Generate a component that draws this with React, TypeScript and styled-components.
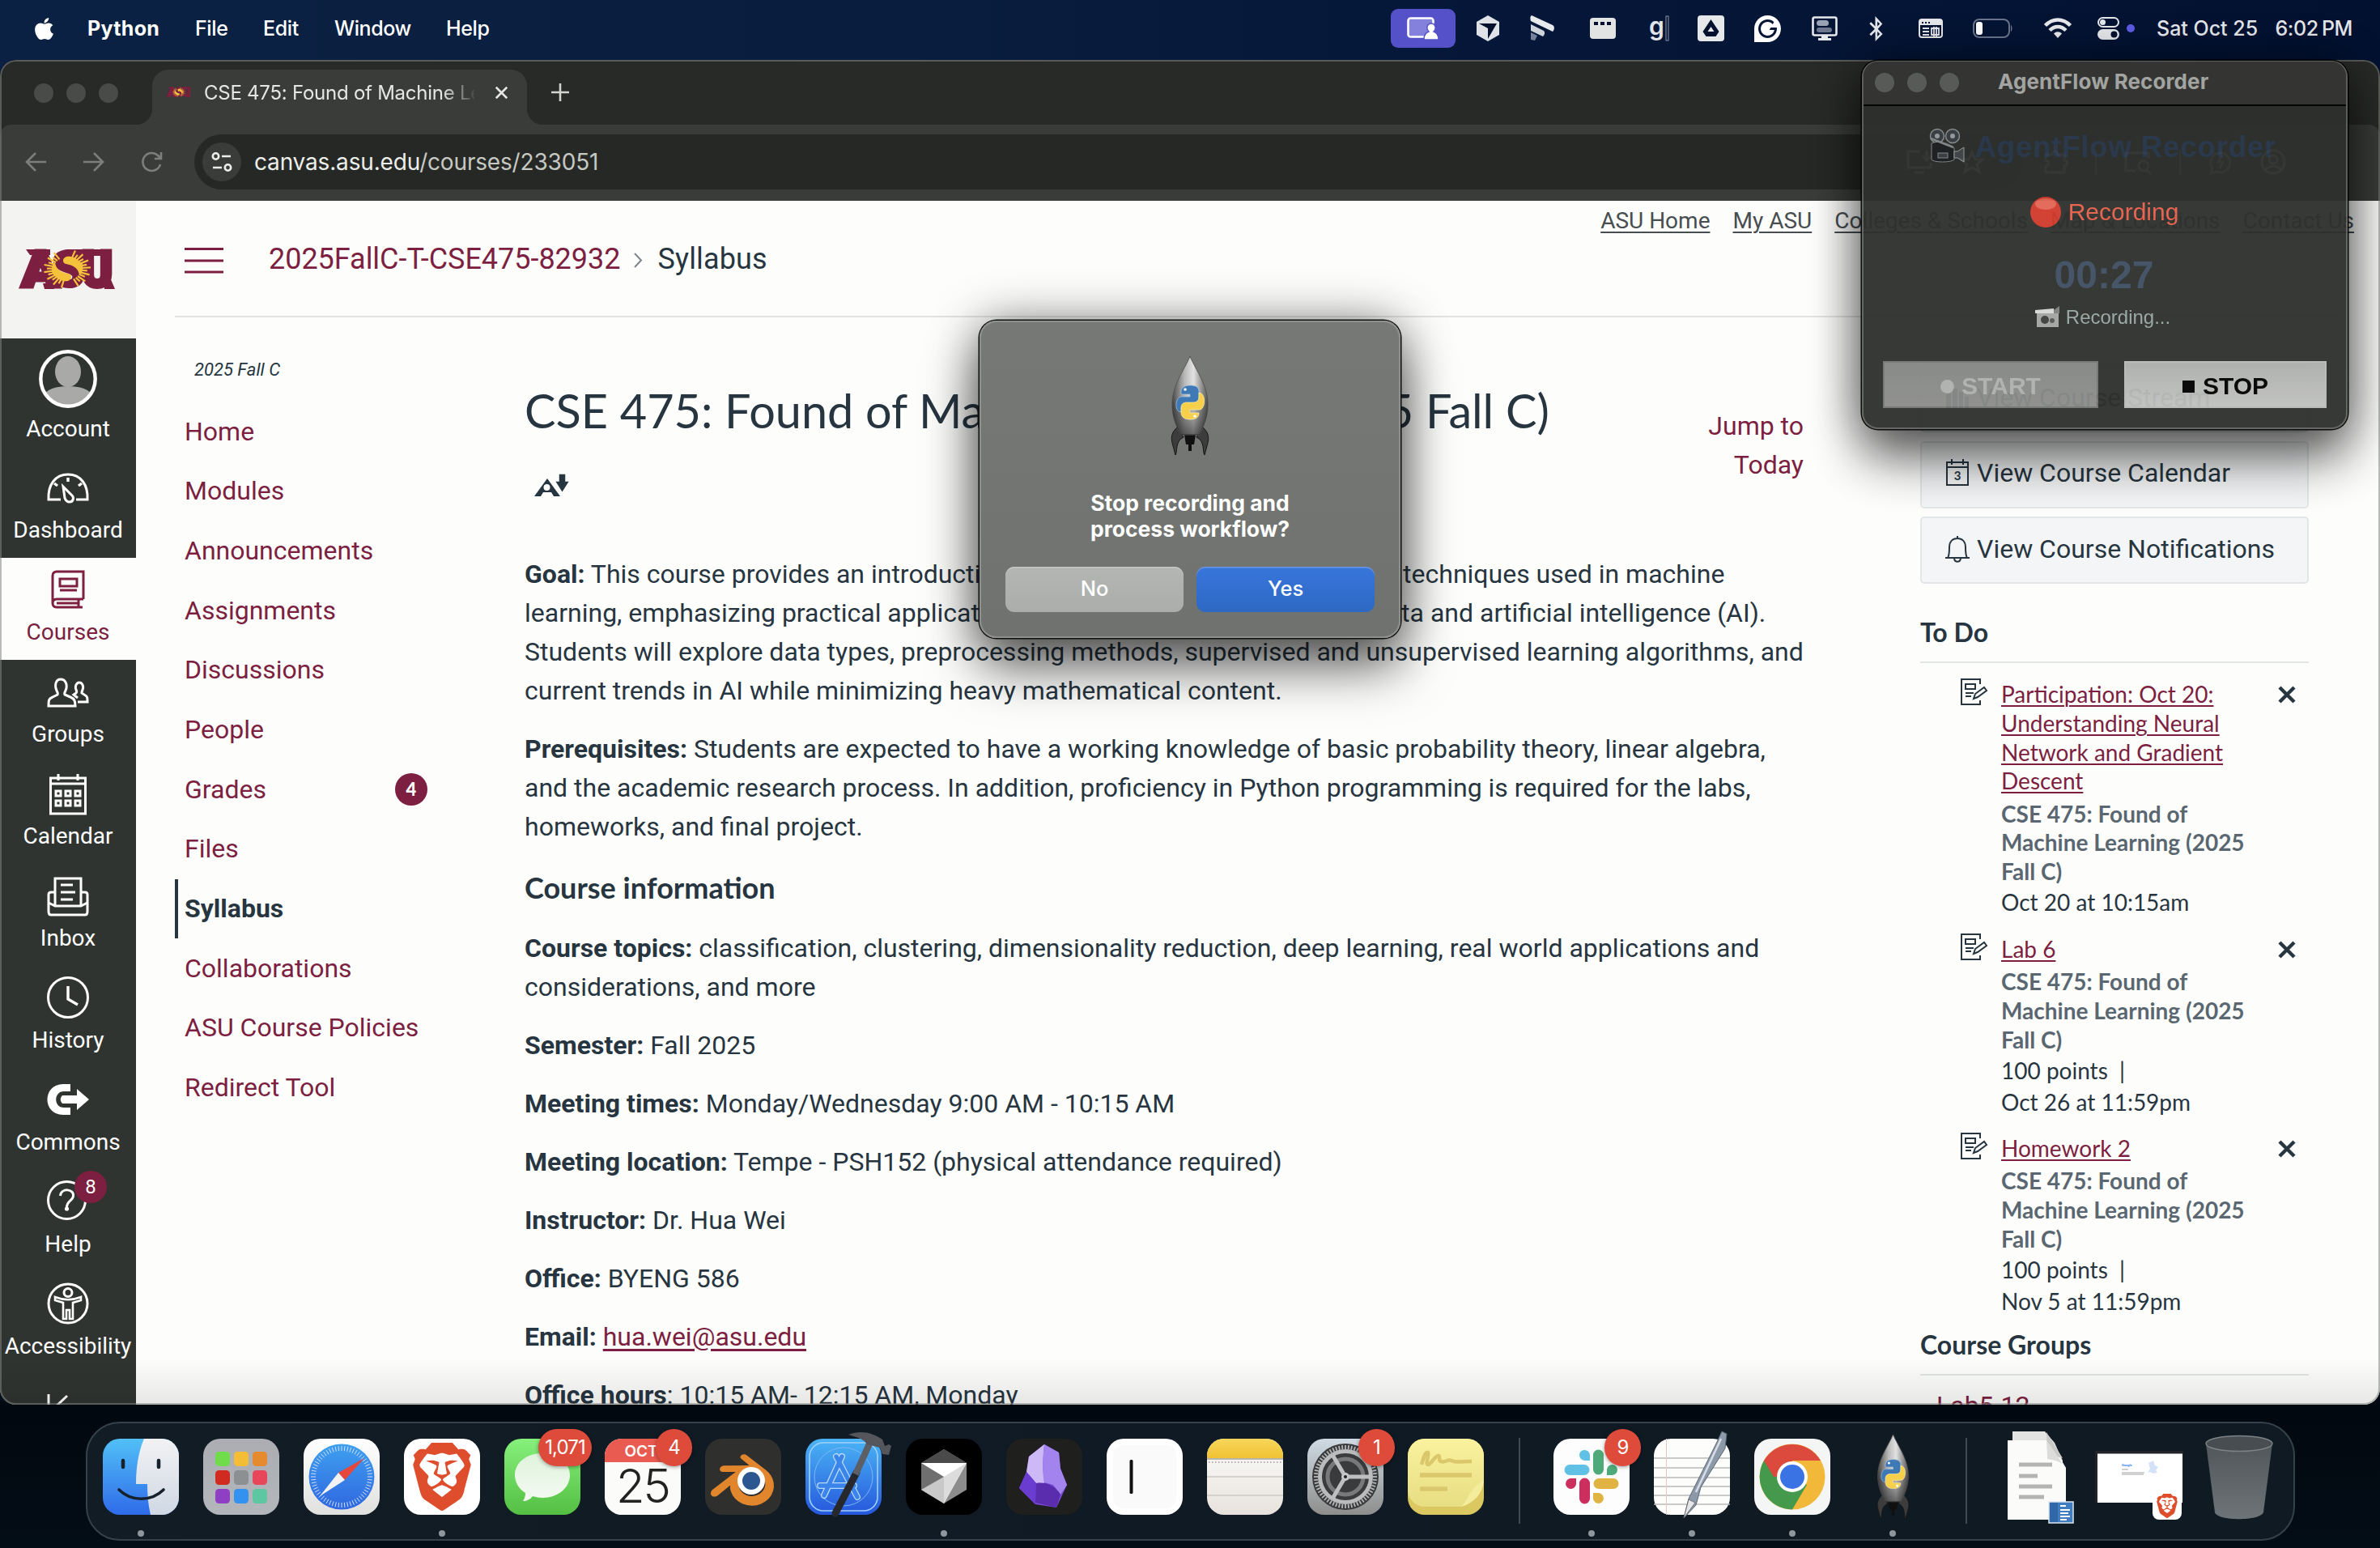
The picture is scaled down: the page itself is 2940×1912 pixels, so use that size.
import React from "react";
import styled, { createGlobalStyle, css } from "styled-components";
import { FaApple, FaBluetoothB } from "react-icons/fa";
import { SiBrave, SiBlender, SiGrammarly } from "react-icons/si";

const MAROON = "#7c1f40";
const INK = "#273540";

const GlobalStyle = createGlobalStyle`
  * { box-sizing: border-box; }
  html, body { margin: 0; padding: 0; width: 2940px; height: 1912px; overflow: hidden; background: #02080f; }
  svg { display: block; overflow: visible; flex: none; }
  p, h1, h2, h3, ul { margin: 0; padding: 0; }
`;

/* ---------- desktop ---------- */

const Desktop = styled.div`
  position: relative;
  width: 2940px;
  height: 1912px;
  overflow: hidden;
  font-family: Roboto, "Liberation Sans", sans-serif;
  background:
    linear-gradient(180deg, transparent 0 1700px, #02080f 1735px, #030d16 1912px),
    linear-gradient(90deg, #0b2143 0%, #0a1f40 30%, #06183a 58%, #021130 100%);
`;

const SystemText = css`
  font-family: Inter, Roboto, sans-serif;
`;

const MenuBar = styled.header`
  ${SystemText}
  display: flex;
  align-items: center;
  height: 74px;
  padding: 0 34px 4px 39px;
  color: #fff;
  font-size: 25px;
`;

const MenuTitle = styled.span<{ $w: number; $bold?: boolean; $ls?: number }>`
  width: ${(p) => p.$w}px;
  font-weight: ${(p) => (p.$bold ? 700 : 500)};
  letter-spacing: ${(p) => p.$ls ?? -0.4}px;
  white-space: nowrap;
`;

const Status = styled.div`
  display: flex;
  align-items: center;
  margin-left: auto;
  color: #e6e8ec;
`;

const Slot = styled.span<{ $w: number; $ml: number }>`
  display: flex;
  justify-content: center;
  align-items: center;
  width: ${(p) => p.$w}px;
  margin-left: ${(p) => p.$ml}px;
`;

const SharePill = styled.span`
  display: flex;
  align-items: center;
  justify-content: center;
  width: 80px;
  height: 48px;
  border-radius: 9px;
  background: #5551c9;
`;

const Clock = styled.span`
  display: flex;
  justify-content: space-between;
  width: 242px;
  margin-left: 27px;
  font-weight: 500;
  letter-spacing: 0;
  white-space: nowrap;
`;

const ClockTime = styled.span`
  letter-spacing: -0.4px;
  word-spacing: -2px;
`;

/* ---------- browser ---------- */

const Browser = styled.section`
  position: absolute;
  left: 0;
  top: 74px;
  width: 2940px;
  height: 1661px;
  display: flex;
  flex-direction: column;
  border-radius: 20px;
  overflow: hidden;
  background: #282a27;
  &::after {
    content: "";
    position: absolute;
    inset: 0;
    border-radius: 20px;
    pointer-events: none;
    background: linear-gradient(180deg, transparent 96.5%, rgba(0, 0, 0, 0.09) 100%);
    box-shadow: inset 0 0 0 2px rgba(130, 132, 128, 0.55);
  }
`;

const TabStrip = styled.div`
  display: flex;
  align-items: flex-end;
  height: 80px;
  padding-left: 42px;
`;

const Lights = styled.div<{ $c: string; $pb?: number }>`
  display: flex;
  gap: 16px;
  padding-bottom: ${(p) => p.$pb ?? 0}px;
  i {
    width: 24px;
    height: 24px;
    border-radius: 50%;
    background: ${(p) => p.$c};
  }
`;

const Tab = styled.div`
  ${SystemText}
  position: relative;
  display: flex;
  align-items: center;
  width: 463px;
  height: 68px;
  margin-left: 42px;
  padding: 0 24px 12px 18px;
  border-radius: 20px 20px 0 0;
  background: #393c38;
  color: #e6e7e4;
  font-size: 24px;
  &::before,
  &::after {
    content: "";
    position: absolute;
    bottom: 0;
    width: 20px;
    height: 20px;
  }
  &::before {
    left: -20px;
    background: radial-gradient(circle at 0 0, transparent 20px, #393c38 20.5px);
  }
  &::after {
    right: -20px;
    background: radial-gradient(circle at 100% 0, transparent 20px, #393c38 20.5px);
  }
`;

const TabTitle = styled.span`
  flex: 1;
  margin: 0 26px 0 16px;
  overflow: hidden;
  white-space: nowrap;
  letter-spacing: -0.25px;
  mask-image: linear-gradient(90deg, #000 88%, transparent 101%);
`;

const NewTab = styled.span`
  margin: 0 0 29px 30px;
`;

const Toolbar = styled.div`
  display: flex;
  align-items: center;
  height: 94px;
  padding: 0 30px 2px 30px;
  border-radius: 14px 14px 0 0;
  background: #393c38;
`;

const NavIcons = styled.div`
  display: flex;
  gap: 44px;
  width: 210px;
`;

const Omnibox = styled.div`
  ${SystemText}
  display: flex;
  align-items: center;
  width: 2260px;
  height: 68px;
  padding: 0 50px 0 10px;
  border-radius: 34px;
  background: #262825;
  color: #c6c8c4;
  font-size: 28px;
  b { font-weight: 400; color: #eceeea; }
`;

const SiteInfo = styled.span`
  display: flex;
  align-items: center;
  justify-content: center;
  width: 48px;
  height: 48px;
  margin-right: 16px;
  border-radius: 50%;
  background: #393c38;
`;

const Address = styled.span`
  flex: 1;
  letter-spacing: -0.17px;
`;

const ToolIcons = styled.div<{ $ml?: number }>`
  display: flex;
  align-items: center;
  gap: 34px;
  margin-left: ${(p) => p.$ml ?? 0}px;
`;

const Divider = styled.i`
  width: 2px;
  height: 30px;
  background: #aaa;
`;

/* ---------- canvas page ---------- */

const Page = styled.div`
  flex: 1;
  display: flex;
  min-height: 0;
  background: #fdfefc;
  color: ${INK};
`;

const Rail = styled.nav`
  width: 168px;
  background: #303430;
`;

const LogoBox = styled.div`
  display: flex;
  align-items: center;
  justify-content: center;
  height: 170px;
  background: #f3f4f2;
`;

const RailItem = styled.div<{ $active?: boolean; $h?: number }>`
  display: flex;
  flex-direction: column;
  align-items: center;
  gap: 8.5px;
  height: ${(p) => p.$h ?? 126}px;
  padding-top: 14px;
  background: ${(p) => (p.$active ? "#fdfefc" : "transparent")};
  color: ${(p) => (p.$active ? MAROON : "#fff")};
  font-size: 28px;
  line-height: 34px;
  white-space: nowrap;
`;

const RailIcon = styled.span`
  position: relative;
`;

const RailBadge = styled.span`
  position: absolute;
  left: 34px;
  top: -13px;
  width: 40px;
  height: 40px;
  border-radius: 50%;
  background: ${MAROON};
  color: #fff;
  font-size: 24px;
  line-height: 40px;
  text-align: center;
`;

const Main = styled.main`
  flex: 1;
  display: flex;
  flex-direction: column;
  padding: 0 48px;
`;

const PageHeader = styled.div`
  display: flex;
  justify-content: space-between;
  height: 144px;
  border-bottom: 2px solid #e2e4e3;
`;

const Crumbs = styled.div`
  display: flex;
  align-items: center;
  height: 143px;
  padding-left: 12px;
  font-size: 36px;
  letter-spacing: 0.15px;
  a { color: ${MAROON}; margin-left: 56px; letter-spacing: -0.03px; }
`;

const CrumbArrow = styled.span`
  margin: 3px 18px 0 17px;
`;

const TopLinks = styled.div`
  display: flex;
  gap: 28px;
  margin-right: -16px;
  padding-top: 8px;
  font-size: 28px;
  line-height: 34px;
  color: #484d50;
  span { text-decoration: underline; text-decoration-thickness: 2px; text-underline-offset: 4px; }
`;

const Columns = styled.div`
  flex: 1;
  display: flex;
  min-height: 0;
`;

const CourseNav = styled.nav`
  width: 432px;
  padding-top: 50px;
`;

const Term = styled.div`
  height: 54.5px;
  padding-left: 24px;
  font-size: 22px;
  font-style: italic;
  line-height: 30px;
`;

const NavRow = styled.div<{ $active?: boolean }>`
  display: flex;
  align-items: center;
  justify-content: space-between;
  width: 312px;
  height: 73.67px;
  padding: 0 0 1px 8px;
  border-left: 4px solid ${(p) => (p.$active ? INK : "transparent")};
  color: ${(p) => (p.$active ? INK : MAROON)};
  font-size: 32px;
  font-weight: ${(p) => (p.$active ? 700 : 400)};
`;

const Count = styled.span`
  width: 40px;
  height: 40px;
  border-radius: 50%;
  background: ${MAROON};
  color: #fff;
  font: 900 22px/39px Lato, sans-serif;
  text-align: center;
`;

const Article = styled.article`
  width: 1580px;
  font-size: 32px;
  line-height: 48px;
  p { margin-bottom: 24px; white-space: nowrap; }
  p a { color: ${MAROON}; text-decoration: underline; text-underline-offset: 4px; }
`;

const Tight = styled.span`
  letter-spacing: -0.4px;
`;

const TitleRow = styled.div`
  display: flex;
  justify-content: space-between;
  height: 293px;
  padding-top: 78px;
`;

const CourseTitle = styled.h1`
  padding-top: 1px;
  font: 400 57.6px/72px Lato, sans-serif;
  white-space: nowrap;
`;

const AccessScore = styled.span`
  display: block;
  margin: 42px 0 0 12px;
`;

const JumpLink = styled.a`
  padding-top: 32px;
  color: ${MAROON};
  text-align: right;
`;

const SectionTitle = styled.h3`
  margin-bottom: 24px;
  font: 700 36px/54px Lato, sans-serif;
`;

const Aside = styled.aside`
  width: 480px;
  margin-left: 144px;
  padding-top: 59px;
  font-family: Lato, sans-serif;
`;

const AsideButton = styled.div`
  display: flex;
  align-items: center;
  gap: 9px;
  height: 83px;
  margin-bottom: 10.6px;
  padding: 0 0 4px 29px;
  border: 2px solid #e3e6e8;
  border-radius: 5px;
  background: #f4f5f6;
  font: 400 32px Roboto, sans-serif;
  white-space: nowrap;
`;

const AsideHead = styled.h2<{ $mt: number }>`
  height: 58px;
  margin-top: ${(p) => p.$mt}px;
  border-bottom: 2px solid #e2e5e5;
  font-size: 32px;
  font-weight: 700;
  line-height: 40px;
`;

const Todo = styled.div<{ $first?: boolean }>`
  display: flex;
  margin-top: ${(p) => (p.$first ? 21.5 : 20.5)}px;
  padding-left: 50px;
  font-size: 28px;
`;

const TodoMark = styled.span`
  margin-top: -2px;
`;

const TodoClose = styled.span`
  margin-top: -2px;
`;

const TodoBody = styled.div`
  width: 342px;
  margin-left: 18px;
  white-space: nowrap;
`;

const TodoTitle = styled.div`
  margin-bottom: 4.5px;
  color: ${MAROON};
  line-height: 35.7px;
  text-decoration: underline;
  text-decoration-thickness: 2px;
  text-underline-offset: 3px;
`;

const TodoCourse = styled.div`
  color: #5a6771;
  font-weight: 700;
  line-height: 35.9px;
`;

const TodoLine = styled.div`
  line-height: 39px;
  white-space: pre;
`;

const GroupLink = styled.div`
  padding: 13px 0 0 20px;
  color: ${MAROON};
  font: 400 32px/48px Roboto, sans-serif;
`;

/* ---------- recorder ---------- */

const Recorder = styled.section`
  position: absolute;
  left: 2300px;
  top: 75px;
  width: 600px;
  height: 455px;
  display: flex;
  flex-direction: column;
  align-items: center;
  border-radius: 20px;
  background: #2f312d;
  opacity: 0.957;
  font-family: "Liberation Sans", sans-serif;
  box-shadow: 0 0 0 1.5px #000, inset 0 0 0 2px #60625f, 0 36px 64px rgba(0, 0, 0, 0.62), 0 0 60px rgba(0, 0, 0, 0.42);
`;

const RecorderBar = styled.div`
  ${SystemText}
  display: flex;
  align-items: center;
  width: 596px;
  height: 55px;
  margin-top: 1px;
  padding: 0 0 2px 14px;
  border-bottom: 2px solid #050505;
  border-radius: 18px 18px 0 0;
  background: #363734;
  color: #a9aba8;
  font-size: 26px;
  font-weight: 700;
  span { margin-left: 48px; margin-top: -2px; letter-spacing: 0.1px; white-space: nowrap; }
`;

const RecTitle = styled.div`
  display: flex;
  align-items: center;
  gap: 12px;
  height: 46px;
  margin: 25px 0 0 -5px;
  color: #2b3a4e;
  font-size: 37px;
  font-weight: 700;
  letter-spacing: 0.6px;
  white-space: nowrap;
  span { padding-top: 5px; }
`;

const RecState = styled.div`
  display: flex;
  align-items: center;
  gap: 9px;
  height: 40px;
  margin: 40px 0 0 -1px;
  color: #e5604b;
  font-size: 30px;
`;

const RecTimer = styled.div`
  margin: 30px 0 0 -2px;
  color: #3f4e63;
  font-size: 48px;
  font-weight: 700;
  line-height: 56px;
`;

const RecNote = styled.div`
  display: flex;
  align-items: center;
  gap: 7px;
  height: 32px;
  margin: 8px 0 0 -5px;
  color: #99a6a5;
  font-size: 24px;
`;

const RecButtons = styled.div`
  display: flex;
  gap: 32px;
  margin-top: 38px;
`;

const RecButton = styled.div<{ $stop?: boolean }>`
  display: flex;
  align-items: center;
  justify-content: center;
  gap: ${(p) => (p.$stop ? 10 : 9)}px;
  width: ${(p) => (p.$stop ? 250 : 266)}px;
  height: 58px;
  padding-top: 4px;
  border: 2px solid ${(p) => (p.$stop ? "#b6b8b5" : "#747673")};
  background: ${(p) => (p.$stop ? "linear-gradient(#acaeab, #c0c2bf)" : "linear-gradient(#848683, #8c8e8b)")};
  color: ${(p) => (p.$stop ? "#000" : "#aeb0ad")};
  font-size: 30px;
  font-weight: 700;
`;

/* ---------- alert ---------- */

const Alert = styled.section`
  ${SystemText}
  position: absolute;
  left: 1210px;
  top: 396px;
  width: 520px;
  height: 392px;
  display: flex;
  flex-direction: column;
  align-items: center;
  padding: 43px 0 0 0;
  border-radius: 21px;
  background: linear-gradient(#777976, #737572 50%, #707270);
  color: #fff;
  box-shadow: 0 0 0 1.5px #111, inset 0 0 0 2px #8e908d, 0 36px 64px rgba(0, 0, 0, 0.58), 0 0 60px rgba(0, 0, 0, 0.42);
`;

const AlertText = styled.p`
  margin-top: 42px;
  font-size: 26.5px;
  font-weight: 700;
  line-height: 32px;
  letter-spacing: -0.02px;
  text-align: center;
  white-space: nowrap;
`;

const AlertButtons = styled.div`
  display: flex;
  gap: 16px;
  margin-top: 31px;
`;

const AlertButton = styled.div<{ $primary?: boolean }>`
  width: 220px;
  height: 56px;
  border-radius: 11px;
  background: ${(p) => (p.$primary ? "linear-gradient(#3876dc, #2d68c2)" : "linear-gradient(#b4b6b3, #abadaa)")};
  box-shadow: inset 0 1.5px 0 rgba(255, 255, 255, 0.25);
  font-size: 25.5px;
  font-weight: 500;
  line-height: 53px;
  text-align: center;
`;

/* ---------- dock ---------- */

const DockBar = styled.footer`
  position: absolute;
  left: 106px;
  top: 1756px;
  width: 2729px;
  height: 147px;
  display: flex;
  padding: 19px 4px 0;
  border: 2px solid #36424b;
  border-radius: 42px;
  background: linear-gradient(90deg, #111c24, #101a24 50%, #0f1a22);
`;

const DockCell = styled.div`
  position: relative;
  display: flex;
  flex-direction: column;
  align-items: center;
  width: 124px;
  flex: none;
`;

const Running = styled.i`
  width: 8px;
  height: 8px;
  margin-top: 19px;
  border-radius: 50%;
  background: #8d979d;
`;

const DockBadge = styled.span<{ $w?: number }>`
  ${SystemText}
  position: absolute;
  right: 1px;
  top: -12px;
  width: ${(p) => p.$w ?? 45}px;
  height: 46px;
  border-radius: 23px;
  background: #df4b3b;
  color: #fff;
  font-size: 24px;
  letter-spacing: -0.9px;
  line-height: 46px;
  text-align: center;
  box-shadow: 0 1px 5px rgba(0, 0, 0, 0.4);
`;

const DockRule = styled.i`
  width: 2px;
  height: 106px;
  margin: -1px 26.5px 0 27.5px;
  background: #3f4a52;
`;

/* ---------- drawings ---------- */

const sunRay = (deg: number, i: number) => {
  const a = (deg * Math.PI) / 180;
  const r = i % 2 ? 25 : 29;
  return (
    <line
      key={deg}
      x1={58 + Math.cos(a) * 17}
      y1={25 + Math.sin(a) * 14}
      x2={58 + Math.cos(a) * r}
      y2={25 + Math.sin(a) * (r - 5)}
    />
  );
};

const AsuLogo = ({ w = 118, h = 52 }: { w?: number; h?: number }) => (
  <svg width={w} height={h} viewBox="0 0 118 52">
    <g fontFamily="Roboto, sans-serif" fontWeight="900" fill={MAROON} stroke={MAROON} strokeWidth="5">
      <text x="2" y="47" fontSize="61" textLength="46" lengthAdjust="spacingAndGlyphs">A</text>
      <text x="76" y="47" fontSize="61" textLength="38" lengthAdjust="spacingAndGlyphs">U</text>
      <text x="39" y="47" fontSize="61" strokeWidth="3" textLength="40" lengthAdjust="spacingAndGlyphs">S</text>
    </g>
    <path d="M7 1h30v7H12zM56 1h57v8H70zM28 43h14v7H30zM104 36h7l6 14h-13z" fill={MAROON} />
    <g stroke="#f5c33b" strokeWidth="2.2">
      {Array.from({ length: 13 }, (_, i) => sunRay(-70 + i * 11, i))}
      {Array.from({ length: 13 }, (_, i) => sunRay(104 + i * 11, i))}
    </g>
    <path d="M53 15c0-7 13-8 22 3 3 3 3 11-2 15-1-8-6-11-12-13-4-1-8-1-8-5z" fill="#f5c33b" />
    <path d="M63 35c0 7-13 8-22-3-3-3-3-11 2-15 1 8 6 11 12 13 4 1 8 1 8 5z" fill="#f5c33b" />
  </svg>
);

const Rocket = ({ w, h }: { w: number; h: number }) => (
  <svg width={w} height={h} viewBox="0 0 48 124">
    <defs>
      <linearGradient id="hull" x1="0" x2="1">
        <stop offset="0" stopColor="#4a4a4a" />
        <stop offset=".35" stopColor="#b9b9b9" />
        <stop offset=".6" stopColor="#e2e2e2" />
        <stop offset="1" stopColor="#555" />
      </linearGradient>
      <linearGradient id="hullShade" x1="0" y1="0" x2="0" y2="1">
        <stop offset=".5" stopColor="#000" stopOpacity="0" />
        <stop offset="1" stopColor="#000" stopOpacity=".55" />
      </linearGradient>
    </defs>
    <path d="M9 88c-7 6-9 12-7 20l4 15c3-4-1-17 10-22zM39 88c7 6 9 12 7 20l-4 15c-3-4 1-17-10-22z" fill="#3b3c3b" stroke="#161616" />
    <path d="M17 98h14l-2 12h-3v8h-4v-8h-3z" fill="#101010" />
    <path d="M24 1C17 18 1 38 2 62c0 14 5 24 10 36h24c5-12 10-22 10-36C47 38 31 18 24 1z" fill="url(#hull)" stroke="#555" />
    <path d="M24 1C17 18 1 38 2 62c0 14 5 24 10 36h24c5-12 10-22 10-36C47 38 31 18 24 1z" fill="url(#hullShade)" />
    <path d="M13 45c0-5 4-8 11-8s11 2 11 8v8c0 4-3 6-7 6h-8c-5 0-7 3-7 7v4c-8 0-8-16-1-19h12v-3H13z" fill="#3e78b5" stroke="#a8c4e0" strokeWidth=".7" />
    <path d="M35 71c0 6-4 8-11 8s-11-3-11-9v-6c0-4 3-6 7-6h8c5 0 7-3 7-7v-5c8 0 9 17 2 21H24v4z" fill="#f6cf4b" stroke="#fbeeb5" strokeWidth=".7" />
    <circle cx="18" cy="42" r="1.8" fill="#fff" />
    <circle cx="30" cy="75" r="1.8" fill="#fff" />
  </svg>
);

const line = { fill: "none", stroke: "currentColor", strokeWidth: 3 } as const;

const railIcons: Record<string, React.ReactNode> = {
  Account: (
    <svg width="72" height="72" viewBox="0 0 72 72">
      <clipPath id="face"><circle cx="36" cy="36" r="32" /></clipPath>
      <circle cx="36" cy="36" r="34" fill="#303430" />
      <g clipPath="url(#face)" fill="#a9aaa8">
        <ellipse cx="36" cy="27" rx="16" ry="19" />
        <path d="M4 72V58c6-10 18-13 32-13s26 3 32 13v14z" />
      </g>
      <circle cx="36" cy="36" r="33.7" fill="none" stroke="#fff" strokeWidth="4.4" />
    </svg>
  ),
  Dashboard: (
    <svg width="52" height="52" viewBox="0 0 52 52" {...line}>
      <path d="M17 40H2C1 22 10 9 26 9s25 13 24 31H36" />
      <path d="M20 24l11 11c3 3 1 8-3 8-3 0-5-2-6-5z" />
      <path d="M26 13v5M9 20l4 3M43 20l-4 3" strokeWidth="3.4" />
    </svg>
  ),
  Courses: (
    <svg width="52" height="52" viewBox="0 0 52 52" {...line}>
      <path d="M45 37H12c-4 0-5 3-5 5s1 5 5 5h32M7 42V8c0-3 2-5 5-5h33v34M39 37v10M12 42h27" />
      <path d="M16 12h21v9H16zM16 26h21" />
    </svg>
  ),
  Groups: (
    <svg width="52" height="52" viewBox="0 0 52 52" {...line}>
      <path d="M2 43c0-7 0-9 5-11l6-3c1-1 0-3-1-5-3-7-1-14 5-14s9 7 6 14c-1 2-2 4-1 5l7 3c5 2 6 5 6 11z" />
      <path d="M38 38h12c0-6 0-7-4-9l-3-2c0-1 0-2 1-4 2-5-1-9-4-9s-6 4-4 9c1 2 1 3 0 4l-3 2 5 4" />
    </svg>
  ),
  Calendar: (
    <svg width="52" height="52" viewBox="0 0 52 52" {...line}>
      <path d="M4.500 50V6h43v44zM4.500 13h43M14 1v8M38 1v8" />
      <path d="M11 22h6v6h-6zM23 22h6v6h-6zM35 22h6v6h-6zM11 34h6v6h-6zM23 34h6v6h-6zM35 34h6v6h-6z" />
    </svg>
  ),
  Inbox: (
    <svg width="52" height="52" viewBox="0 0 52 52" {...line}>
      <path d="M10 21H5c-2 0-3 1-3 3v21c0 3 1 4 3 4h42c2 0 3-1 3-4V24c0-2-1-3-3-3h-5" />
      <path d="M10 38V4h32v34M2 34l8 4h32l8-4M17 12h15M17 21h18M17 30h15" />
    </svg>
  ),
  History: (
    <svg width="52" height="52" viewBox="0 0 52 52" {...line}>
      <circle cx="26" cy="25" r="24.500" />
      <path d="M26 11v16l12 7" strokeWidth="3.400" />
    </svg>
  ),
  Commons: (
    <svg width="52" height="52" viewBox="0 0 52 52" fill="currentColor">
      <path d="M29 6v9H21c-13 0-13 20 0 20h8v9H20C-6 44-6 6 20 6zM19 20h18v-8l15 13-15 13v-8H19c-3-3-3-7 0-10z" />
    </svg>
  ),
  Help: (
    <svg width="52" height="52" viewBox="0 0 52 52" {...line}>
      <circle cx="24.500" cy="23.500" r="23" />
      <path d="M16.500 18c1-10 17-9 16 0 0 6-8 6-8 14" />
      <circle cx="24.500" cy="34" r="2.600" fill="currentColor" stroke="none" />
    </svg>
  ),
  Accessibility: (
    <svg width="52" height="52" viewBox="0 0 52 52" {...line}>
      <circle cx="26" cy="25" r="24" />
      <circle cx="26" cy="11.500" r="5" />
      <path d="M10 17c10 4 22 4 32 0v4l-10 3v20h-4V33h-4v11h-4V24l-10-3z" strokeWidth="2.600" />
    </svg>
  ),
  Collapse: (
    <svg width="52" height="52" viewBox="0 0 52 52" {...line}>
      <path d="M2 11v38M25 13L8 29l17 16M8 29h42" />
    </svg>
  ),
};

const CalendarDay = () => (
  <svg width="30" height="36" viewBox="0 0 30 36" fill="none" stroke={INK} strokeWidth="2">
    <path d="M2 5h26v28H2zM2 11h26M8 1v7M22 1v7" />
    <text x="15" y="27" fontFamily="Lato" fontWeight="700" fontSize="15" fill={INK} stroke="none" textAnchor="middle">3</text>
  </svg>
);

const Bell = () => (
  <svg width="30" height="36" viewBox="0 0 30 36" fill="none" stroke={INK} strokeWidth="2">
    <path d="M0 29h30M3 29c2-3 2-7 2-13C5 9 9 5 15 5s10 4 10 11c0 6 0 10 2 13M11 30c1 5 7 5 8 0M15 2v3" />
  </svg>
);

const Bars = () => (
  <svg width="30" height="30" viewBox="0 0 30 30" fill={INK}>
    <path d="M1 10h6v18H1zM9 4h6v24H9zM17 8h5v20h-5zM24 14h5v14h-5z" />
  </svg>
);

const TodoIcon = () => (
  <svg width="32" height="34" viewBox="0 0 32 34" fill="none" stroke={INK} strokeWidth="2">
    <path d="M24 7V1H1v31h23v-5M6 7h12v6H6zM6 18h10M6 22h7" />
    <path d="M16 25l2-6 11-8 3 4-11 8z" />
  </svg>
);

const Cross = ({ s, w, c }: { s: number; w: number; c: string }) => (
  <svg width={s} height={s} viewBox="0 0 20 20" stroke={c} strokeWidth={w}>
    <path d="M1 1l18 18M19 1L1 19" />
  </svg>
);

const statusIcons: Array<[number, number, React.ReactNode]> = [
  [28, 26, <svg width="28" height="32" viewBox="0 0 28 32"><path d="M14 0l14 8v16l-14 8L0 24V8z" fill="#dfe2e6" /><path d="M3 10h22L14 29V16z" fill="#03112e" /></svg>],
  [30, 38, <svg width="30" height="32" viewBox="0 0 30 32" fill="#e8eaec"><path d="M2 0l26 12c3 2 2 6 0 8L1 7C0 4 0 1 2 0z" /><path d="M1 11l16 8c2 2 1 5-1 7L1 19z" fill="#cfd3da" /><path d="M1 21l8 4-3 6-5-1z" fill="#76809a" /></svg>],
  [32, 44, <svg width="32" height="26" viewBox="0 0 32 26"><rect width="32" height="26" rx="4" fill="#e2e4e3" /><path d="M5 5h5v4H5zM13 5h5v4h-5zM21 5h5v4h-5z" fill="#03112e" /></svg>],
  [24, 42, <svg width="24" height="34" viewBox="0 0 24 34"><text x="-1" y="25" fontFamily="Inter" fontWeight="600" fontSize="30" fill="#e2e5e9">g</text><rect x="20" y="2" width="3" height="30" fill="none" stroke="#8d96a5" /></svg>],
  [33, 35, <svg width="33" height="32" viewBox="0 0 33 32"><rect width="33" height="32" rx="4" fill="#e6e8ea" /><path d="M16.500 5l10 15-4 6h-12l-4-6zM16.500 14l-4 6h8z" fill="#03112e" fillRule="evenodd" /></svg>],
  [33, 37, <SiGrammarly size={33} color="#fff" />],
  [32, 38, <svg width="32" height="30" viewBox="0 0 32 30"><rect x="1.500" y="1.500" width="29" height="22" rx="2" fill="none" stroke="#e6e8ec" strokeWidth="2.600" /><path d="M12 24h8v3h4v3H8v-3h4z" fill="#e6e8ec" /><rect x="6" y="5" width="15" height="7" rx="3.500" fill="#9aa3b3" /><rect x="6" y="14" width="19" height="6" rx="3" fill="#6d788e" /></svg>],
  [17, 39, <FaBluetoothB size={31} />],
  [30, 44, <svg width="30" height="24" viewBox="0 0 30 24"><rect x="1" y="1" width="28" height="22" rx="3" fill="none" stroke="#e6e8ec" strokeWidth="2" /><path d="M2 2h26v6H2z" fill="#e6e8ec" /><path d="M5 12h8M5 16h8M5 20h8M16 12h9v8h-9zM19 10v12M22 10v12" stroke="#e6e8ec" strokeWidth="1.800" fill="none" /><path d="M4 5h2M8 5h2M12 5h2" stroke="#03112e" strokeWidth="2" /></svg>],
  [49, 37, <svg width="49" height="24" viewBox="0 0 49 24"><rect x="1" y="1" width="44" height="22" rx="7" fill="none" stroke="#6b758b" strokeWidth="2" /><rect x="4" y="4" width="8" height="16" rx="3" fill="#fff" /><path d="M47 8c2 1 2 7 0 8z" fill="#6b758b" /></svg>],
  [34, 39, <svg width="34" height="26" viewBox="0 0 34 26" fill="none" stroke="#e8eaed" strokeWidth="4.500"><path d="M1.500 9.500c9-9.500 22-9.500 31 0M7 15.500c6-6 14-6 20 0" /><path d="M17 25l-5-5.500c3-3 7-3 10 0z" fill="#e8eaed" stroke="none" /></svg>],
  [27, 32, <svg width="27" height="28" viewBox="0 0 27 28"><rect x="1" y="1" width="25" height="11" rx="5.500" fill="none" stroke="#e6e8ec" strokeWidth="2" /><circle cx="6.500" cy="6.500" r="3.500" fill="#e6e8ec" /><rect y="15" width="27" height="13" rx="6.500" fill="#e6e8ec" /><circle cx="20.500" cy="21.500" r="4" fill="#03112e" /></svg>],
  [10, 9, <svg width="10" height="10"><circle cx="5" cy="5" r="5" fill="#5c5ce6" /></svg>],
];

const Tile = ({ fill, children }: { fill: string; children?: React.ReactNode }) => (
  <svg width="94" height="94" viewBox="0 0 94 94">
    <rect width="94" height="94" rx="21" fill={fill} />
    {children}
  </svg>
);

const HiddenDefs = styled.svg`
  position: absolute;
`;

const Gradients = () => (
  <HiddenDefs width="0" height="0">
    <defs>
      {[
        ["gBlue", "#52c0f7", "#2f6bea"],
        ["gGrey", "#f2f2f4", "#cfd8e4"],
        ["gPad", "#abadb2", "#b3b6ba"],
        ["gWhite", "#ffffff", "#e0e0de"],
        ["gSky", "#3fa0ef", "#3067e0"],
        ["gGreen", "#86f07c", "#54bf43"],
        ["gBubble", "#dff3dc", "#f4faf2"],
        ["gXcode", "#4ab4f5", "#2657dc"],
        ["gGear", "#cfdbe4", "#8e8e8c"],
        ["gNote", "#fbf29f", "#e7dd82"],
        ["gYellow", "#f7d65b", "#f1c233"],
        ["gPaper", "#fdfdfb", "#e7e2dd"],
        ["gTrash", "#5c6265", "#7e8486"],
      ].map(([id, a, b]) => (
        <linearGradient key={id} id={id} x1="0" y1="0" x2="0" y2="1">
          <stop offset="0" stopColor={a} />
          <stop offset="1" stopColor={b} />
        </linearGradient>
      ))}
      <clipPath id="tile"><rect width="94" height="94" rx="21" /></clipPath>
    </defs>
  </HiddenDefs>
);

const Spokes = ({ n, r1, r2, c, w }: { n: number; r1: number; r2: number; c: string; w: number }) => (
  <g stroke={c} strokeWidth={w}>
    {Array.from({ length: n }, (_, i) => {
      const a = (i * Math.PI * 2) / n;
      return (
        <line key={i} x1={47 + Math.cos(a) * r1} y1={47 + Math.sin(a) * r1} x2={47 + Math.cos(a) * r2} y2={47 + Math.sin(a) * r2} />
      );
    })}
  </g>
);

const Finder = () => (
  <Tile fill="url(#gBlue)">
    <path clipPath="url(#tile)" d="M51 0h43v94H59c-3-12-4-25-4-38H41c0-20 3-40 10-56z" fill="url(#gGrey)" />
    <path d="M25 27v8M69 27v8" stroke="#15222e" strokeWidth="4.500" strokeLinecap="round" />
    <path d="M20 63c15 15 40 15 55 0" fill="none" stroke="#15222e" strokeWidth="3.600" strokeLinecap="round" />
  </Tile>
);

const Launchpad = () => (
  <Tile fill="url(#gPad)">
    {["#6fdc4b", "#f3bd35", "#e58a2e", "#cf2b20", "#8c9092", "#e8475a", "#8f3fc4", "#3391ef", "#5cc7a0"].map((c, i) => (
      <rect key={c} x={15 + (i % 3) * 23} y={16 + Math.floor(i / 3) * 23} width="18" height="18" rx="4.500" fill={c} />
    ))}
  </Tile>
);

const Safari = () => (
  <Tile fill="url(#gWhite)">
    <circle cx="47" cy="47" r="40.500" fill="url(#gSky)" />
    <Spokes n={60} r1={32} r2={38} c="#cfe2fb" w={1} />
    <path d="M75 24L43 42l8 9z" fill="#e5483b" />
    <path d="M20 71l23-29 8 9z" fill="#f3f3f3" />
  </Tile>
);

const BraveTile = () => (
  <Tile fill="#fff">
    <g transform="translate(5 5)"><SiBrave size={84} color="#de4e2c" /></g>
  </Tile>
);

const Messages = () => (
  <Tile fill="url(#gGreen)">
    <path d="M47 18c-20 0-34 12-34 27 0 9 5 17 13 22 0 4-1 7-3 10 5 0 9-2 12-6 4 1 8 2 12 2 20 0 34-13 34-28S67 18 47 18z" fill="url(#gBubble)" />
  </Tile>
);

const CalendarTile = () => (
  <Tile fill="#fbfbf9">
    <path clipPath="url(#tile)" d="M0 0h94v29H0z" fill="#e95a50" />
    <text x="45" y="22" fontFamily="Inter" fontWeight="600" fontSize="19" fill="#fff" textAnchor="middle">OCT</text>
    <text x="47" y="79" fontFamily="Inter" fontWeight="300" fontSize="58" letterSpacing="-2" fill="#222" textAnchor="middle">25</text>
  </Tile>
);

const BlenderTile = () => (
  <Tile fill="#2f2f2d">
    <g transform="translate(7 12)"><SiBlender size={78} color="#e2862d" /></g>
    <circle cx="57" cy="52" r="17" fill="#fff" />
    <circle cx="57" cy="52" r="11" fill="#2b5690" />
  </Tile>
);

const Xcode = () => (
  <Tile fill="url(#gXcode)">
    <rect x="5" y="5" width="84" height="84" rx="17" fill="none" stroke="#9fd2fb" strokeWidth="1.600" />
    <circle cx="47" cy="47" r="36" fill="none" stroke="#7cb8f8" />
    <g fill="none" stroke="#c5e3ff" strokeWidth="8" strokeLinecap="round" opacity=".9"><path d="M45 22L23 70M38 22l26 50M18 58h42" /></g>
    <g fill="none" stroke="#3a84ea" strokeWidth="5.400" strokeLinecap="round"><path d="M45 22L23 70M38 22l26 50M18 58h42" /></g>
    <path d="M63 42L37 92" stroke="#26282c" strokeWidth="9" strokeLinecap="round" />
    <path d="M80 4L62 44" stroke="#5c5f65" strokeWidth="8" />
    <path d="M53-5c14-6 30-3 42 6l3 8 5-2 3 2-3 11-8-1-3-8-16-4C71-1 62-2 53-5z" fill="#54565c" />
  </Tile>
);

const CursorTile = () => (
  <Tile fill="#000">
    <path d="M47 13l28 17v33L47 80 19 63V30z" fill="#8c8c8c" />
    <path d="M47 13l28 17H19z" fill="#4a4a4a" />
    <path d="M19 63l28 17V47L19 30z" fill="#6f6f6f" />
    <path d="M19 63l28-16v33z" fill="#c8c8c8" />
    <path d="M19 30h56L47 80V47z" fill="#fff" />
    <path d="M75 30L47 80V47z" fill="#dcdcdc" />
  </Tile>
);

const Obsidian = () => (
  <Tile fill="#1f201e">
    <path d="M47 7L28 22l-3 19-9 20 20 20 26 4 13-28-8-20-2-20z" fill="#7b4ed8" />
    <path d="M47 7L28 22l-3 19 12 14h10L45 32z" fill="#cdb9f5" />
    <path d="M47 7l18 10 2 20 8 20-8 12-9-12-11-3c-3-14-2-30 0-47z" fill="#a384ee" />
    <path d="M25 41l12 14-1 26-20-20z" fill="#6a3cd0" />
    <path d="M37 55c14-2 24 4 30 14l-5 16-26-6z" fill="#5a2cae" />
  </Tile>
);

const Notion = () => (
  <Tile fill="#fff">
    <rect x="8" y="8" width="78" height="78" rx="12" fill="#fafafa" />
    <rect x="28.500" y="26" width="4" height="42" rx="1.500" fill="#111" />
  </Tile>
);

const Notes = () => (
  <Tile fill="url(#gPaper)">
    <g clipPath="url(#tile)">
      <path d="M0 0h94v24H0z" fill="url(#gYellow)" />
      <path d="M0 25h94" stroke="#b9b4ac" strokeWidth="2" />
      <path d="M2 29h92" stroke="#b5b0a8" strokeWidth="2" strokeDasharray="1.500 2.500" />
      <path d="M0 47h94M0 70h94" stroke="#cbc8c4" strokeWidth="1.500" />
    </g>
  </Tile>
);

const Settings = () => (
  <Tile fill="url(#gGear)">
    <circle cx="47" cy="47" r="41" fill="#3a3b3c" />
    <Spokes n={60} r1={34} r2={39} c="#b4b6b7" w={1.8} />
    <circle cx="47" cy="47" r="31.500" fill="none" stroke="#b9bbbc" strokeWidth="5" />
    <circle cx="47" cy="47" r="22" fill="none" stroke="#77797a" strokeWidth="5" />
    <path d="M47 47h31M47 47L31 20M47 47L31 74" stroke="#bdbfc0" strokeWidth="5" />
    <circle cx="47" cy="47" r="5" fill="#c6c8c9" />
    <circle cx="47" cy="47" r="2" fill="#222" />
  </Tile>
);

const Stickies = () => (
  <Tile fill="#dcc860">
    <path d="M21 0h52a21 21 0 0121 21v30c-2 18-12 28-28 33H21A21 21 0 010 63V21A21 21 0 0121 0z" fill="url(#gNote)" />
    <path d="M94 51c-2 18-12 28-28 33 10-10 8-20 28-33z" fill="#f5eb9c" />
    <path d="M17 32c2-6 4-16 8-15 2 2-4 15 0 15s9-12 13-11c3 1-1 6 3 7 5 2 8-3 13-1 5 3 15 1 25 1" fill="none" stroke="#dcc86c" strokeWidth="4.500" />
    <path d="M15 45h64M15 62h34" stroke="#dcc86c" strokeWidth="5.500" />
  </Tile>
);

const Slack = () => (
  <Tile fill="#fcfdfc">
    <path d="M38 14a6 6 0 00-6 6 7 7 0 006.500 7H45v-7a6.500 6.500 0 00-7-6zM20 32h18a6.500 6.500 0 010 13H20a6.500 6.500 0 010-13z" fill="#61c0e6" />
    <path d="M49 20a6.500 6.500 0 0113 0v18a6.500 6.500 0 01-13 0zM66 45v-7a6.500 6.500 0 117 7z" fill="#4eaa7a" />
    <path d="M45 74a6.500 6.500 0 01-13 0V55a6.500 6.500 0 0113 0zM28 49v7a6.500 6.500 0 11-7-7z" fill="#cc2e5e" />
    <path d="M74 49a6.500 6.500 0 010 13H56a6.500 6.500 0 010-13zM49 67h7a6.500 6.500 0 11-7 7z" fill="#e1b343" />
  </Tile>
);

const TextEdit = () => (
  <Tile fill="#fdfdfc">
    <path d="M0 24h94M0 36h94M0 48h94M0 59h94M0 70h94M0 81h94" stroke="#b9b9b9" strokeWidth="1.300" />
    <path d="M15.500 0v94" stroke="#e8c6c2" strokeWidth="1" />
    <path d="M84-9l6 3-2 18-30 48-6 22-15 16 6-24L78 4z" fill="#8c99a8" stroke="#5b6673" strokeWidth="1" />
    <path d="M83 0L52 66" stroke="#d7dee6" strokeWidth="2.500" />
    <path d="M43 75l8 4-14 19z" fill="#e4e6e8" stroke="#555" strokeWidth=".7" />
  </Tile>
);

const Chrome = () => (
  <Tile fill="#f4f5f5">
    <circle cx="47" cy="47" r="40.500" fill="#f2b83a" />
    <path d="M47 47L12 27a40.500 40.500 0 0035 60.500L65 57z" fill="#45994d" />
    <path d="M12 27a40.500 40.500 0 0170 0H47v20H24z" fill="#db4a3c" />
    <circle cx="47" cy="47" r="19" fill="#fff" />
    <circle cx="47" cy="47" r="15" fill="#3a73e4" />
  </Tile>
);

const DocStack = () => (
  <svg width="78" height="94" viewBox="0 0 78 94">
    <path d="M7-9h40l12 14 10 22v50H7z" fill="#e3e3e1" />
    <path d="M1 2h52l20 34v64H1z" fill="#fbfbfa" />
    <path d="M49-8l20 32-19-4z" fill="#c9c9c7" />
    <path d="M50 3l23 34c-2-8-12-10-23-12z" fill="#dcdcda" />
    <path d="M15 32h41M15 46h23M15 59h41M15 72h31" stroke="#b4b5b3" strokeWidth="5" />
    <rect x="52" y="78" width="30" height="26" fill="#2f67a8" stroke="#dfe8f0" strokeWidth="1.500" />
    <path d="M63 79h18v24H63z" fill="#3f7cc0" />
    <path d="M66 83h7M66 88h12M66 92h10M66 96h12M66 100h8" stroke="#fff" strokeWidth="1.800" />
  </svg>
);

const PageThumb = () => (
  <svg width="109" height="94" viewBox="0 0 109 94">
    <rect y="15" width="109" height="64" fill="#22242a" />
    <path d="M3 18.500h105V79H3z" fill="#fff" />
    <text x="33" y="34" fontFamily="Roboto" fontWeight="700" fontSize="4" fill="#4285f4">Google</text>
    <path d="M33 38h8M33 42h28M33 44h27" stroke="#999" strokeWidth=".9" />
    <path d="M66 30l6-3 2 6 4 2-3 4 2 3-5 1-4-2-3 1 3-5z" fill="#d4e2f8" />
    <rect x="71" y="66" width="36" height="34" rx="8" fill="#fff" />
    <g transform="translate(74 68)"><SiBrave size={30} color="#de4e2c" /></g>
  </svg>
);

const Trash = () => (
  <svg width="84" height="94" viewBox="0 0 84 94">
    <path d="M1 6l11 85c3 11 56 11 60 0L83 6z" fill="url(#gTrash)" opacity=".85" />
    <ellipse cx="42" cy="6" rx="41" ry="9.500" fill="#474d51" stroke="#7c8285" strokeWidth="1.500" />
  </svg>
);

const RocketTile = () => (
  <svg width="94" height="94" viewBox="0 0 94 94">
    <g transform="translate(27 -8)"><Rocket w={41} h={110} /></g>
  </svg>
);

/* ---------- data ---------- */

const railLabels = ["Account", "Dashboard", "Courses", "Groups", "Calendar", "Inbox", "History", "Commons", "Help", "Accessibility"];

const navLabels = [
  "Home", "Modules", "Announcements", "Assignments", "Discussions", "People", "Grades", "Files",
  "Syllabus", "Collaborations", "ASU Course Policies", "Redirect Tool",
];

const facts: Array<[string, React.ReactNode]> = [
  ["Semester:", " Fall 2025"],
  ["Meeting times:", " Monday/Wednesday 9:00 AM - 10:15 AM"],
  ["Meeting location:", " Tempe - PSH152 (physical attendance required)"],
  ["Instructor:", " Dr. Hua Wei"],
  ["Office:", " BYENG 586"],
  ["Email:", <> <a>hua.wei@asu.edu</a></>],
  ["Office hours", ": 10:15 AM- 12:15 AM, Monday"],
];

const todos = [
  { title: ["Participation: Oct 20:", "Understanding Neural", "Network and Gradient", "Descent"], lines: ["Oct 20 at 10:15am"] },
  { title: ["Lab 6"], lines: ["100 points  |", "Oct 26 at 11:59pm"] },
  { title: ["Homework 2"], lines: ["100 points  |", "Nov 5 at 11:59pm"] },
];

type DockEntry = { icon: React.ReactNode; badge?: string; running?: boolean };
const dock: Array<DockEntry | null> = [
  { icon: <Finder />, running: true },
  { icon: <Launchpad /> },
  { icon: <Safari /> },
  { icon: <BraveTile />, running: true },
  { icon: <Messages />, badge: "1,071" },
  { icon: <CalendarTile />, badge: "4" },
  { icon: <BlenderTile /> },
  { icon: <Xcode /> },
  { icon: <CursorTile />, running: true },
  { icon: <Obsidian /> },
  { icon: <Notion /> },
  { icon: <Notes /> },
  { icon: <Settings />, badge: "1" },
  { icon: <Stickies /> },
  null,
  { icon: <Slack />, badge: "9", running: true },
  { icon: <TextEdit />, running: true },
  { icon: <Chrome />, running: true },
  { icon: <RocketTile />, running: true },
  null,
  { icon: <DocStack /> },
  { icon: <PageThumb /> },
  { icon: <Trash /> },
];

/* ---------- app ---------- */

const BrowserWindow = () => (
  <Browser>
    <TabStrip>
      <Lights $c="#484b47" $pb={27}><i /><i /><i /></Lights>
      <Tab>
        <AsuLogo w={30} h={16} />
        <TabTitle>CSE 475: Found of Machine Learning</TabTitle>
        <Cross s={15} w={3.4} c="#e6e7e4" />
      </Tab>
      <NewTab>
        <svg width="22" height="22" viewBox="0 0 22 22" stroke="#d2d4d0" strokeWidth="2.6">
          <path d="M11 0v22M0 11h22" />
        </svg>
      </NewTab>
    </TabStrip>
    <Toolbar>
      <NavIcons>
        <svg width="28" height="28" viewBox="0 0 28 28" fill="none" stroke="#7c7f7b" strokeWidth="2.6"><path d="M27 14H3M14 3L3 14l11 11" /></svg>
        <svg width="28" height="28" viewBox="0 0 28 28" fill="none" stroke="#7c7f7b" strokeWidth="2.6"><path d="M1 14h24M14 3l11 11-11 11" /></svg>
        <svg width="28" height="28" viewBox="0 0 28 28" fill="none" stroke="#7c7f7b" strokeWidth="2.6"><path d="M24 17a11 11 0 11-3-11l4 4M25 2v8h-8" /></svg>
      </NavIcons>
      <Omnibox>
        <SiteInfo>
          <svg width="26" height="24" viewBox="0 0 26 24" fill="none" stroke="#eceeea" strokeWidth="2.600">
            <circle cx="5.500" cy="5" r="3.700" /><path d="M13 5h11M2 19h11" /><circle cx="20.500" cy="19" r="3.700" />
          </svg>
        </SiteInfo>
        <Address><b>canvas.asu.edu</b>/courses/233051</Address>
        <ToolIcons>
          <svg width="34" height="32" viewBox="0 0 34 32" fill="none" stroke="#ccc" strokeWidth="3"><path d="M18 3H3v20h28v-6M11 29h12M26 2v11M21 9l5 5 5-5" /></svg>
          <svg width="28" height="28" viewBox="0 0 28 28" fill="none" stroke="#ccc" strokeWidth="3"><path d="M14 2l4 9h9l-7 6 3 9-9-5-9 5 3-9-7-6h9z" /></svg>
        </ToolIcons>
      </Omnibox>
      <ToolIcons $ml={24}>
        <svg width="30" height="30" viewBox="0 0 30 30" fill="none" stroke="#ccc" strokeWidth="3"><path d="M3 6h8c0-6 7-6 7 0h8v7c5 0 5 7 0 7v8H3v-8c5 0 5-7 0-7z" /></svg>
        <Divider />
        <svg width="34" height="30" viewBox="0 0 34 30" fill="none" stroke="#ccc" strokeWidth="3"><path d="M14 26H2V4h28v7" /><circle cx="24" cy="20" r="6" /><path d="M28 25l5 5" /></svg>
        <Divider />
        <svg width="30" height="30" viewBox="0 0 30 30" fill="none" stroke="#ccc" strokeWidth="2.600"><path d="M5 23a12 12 0 115 4l-7 2z" /><path d="M17 7l-5 8h6l-4 8" /></svg>
        <svg width="32" height="32" viewBox="0 0 32 32" fill="none" stroke="#ccc" strokeWidth="3"><circle cx="16" cy="16" r="14" /><circle cx="16" cy="13" r="5" /><path d="M6 26c5-6 15-6 20 0" /></svg>
      </ToolIcons>
    </Toolbar>
    <Page>
      <Rail>
        <LogoBox><AsuLogo /></LogoBox>
        {railLabels.map((l) => (
          <RailItem key={l} $active={l === "Courses"} $h={l === "Account" ? 145 : 126}>
            <RailIcon>
              {railIcons[l]}
              {l === "Help" && <RailBadge>8</RailBadge>}
            </RailIcon>
            {l}
          </RailItem>
        ))}
        <RailItem>{railIcons.Collapse}</RailItem>
      </Rail>
      <Main>
        <PageHeader>
          <Crumbs>
            <svg width="48" height="34" viewBox="0 0 48 34" stroke={MAROON} strokeWidth="3">
              <path d="M0 4.500h48M0 19h48M0 33h48" />
            </svg>
            <a>2025FallC-T-CSE475-82932</a>
            <CrumbArrow>
              <svg width="11" height="19" viewBox="0 0 11 19" fill="none" stroke="#7d868c" strokeWidth="2"><path d="M1 1l8 8.500L1 18" /></svg>
            </CrumbArrow>
            Syllabus
          </Crumbs>
          <TopLinks>
            {["ASU Home", "My ASU", "Colleges & Schools", "Map & Locations", "Contact Us"].map((l) => <span key={l}>{l}</span>)}
          </TopLinks>
        </PageHeader>
        <Columns>
          <CourseNav>
            <Term>2025 Fall C</Term>
            {navLabels.map((l) => (
              <NavRow key={l} $active={l === "Syllabus"}>
                {l}
                {l === "Grades" && <Count>4</Count>}
              </NavRow>
            ))}
          </CourseNav>
          <Article>
            <TitleRow>
              <div>
                <CourseTitle>CSE 475: Found of Machine Learning (2025 Fall C)</CourseTitle>
                <AccessScore>
                  <svg width="46" height="28" viewBox="0 0 46 28" fill="#273540">
                    <path d="M0 28L16 6l16 22h-8l-3-5H11l-3 5zM15.500 13a4 4 0 100 8 4 4 0 000-8z" fillRule="evenodd" />
                    <path d="M30 0h9v9h5L34.500 24 25 9h5z" stroke="#fdfefc" strokeWidth="1.500" />
                  </svg>
                </AccessScore>
              </div>
              <JumpLink>Jump to<br />Today</JumpLink>
            </TitleRow>
            <p>
              <b>Goal:</b> This course provides an introduction to the fundamental concepts and techniques used in machine<br />
              learning, emphasizing practical applica<Tight>tions and hands-on experience with </Tight>data and artificial intelligence (AI).<br />
              Students will explore data types, preprocessing methods, supervised and unsupervised learning algorithms, and<br />
              current trends in AI while minimizing heavy mathematical content.
            </p>
            <p>
              <b>Prerequisites:</b> Students are expected to have a working knowledge of basic probability theory, linear algebra,<br />
              and the academic research process. In addition, proficiency in Python programming is required for the labs,<br />
              homeworks, and final project.
            </p>
            <SectionTitle>Course information</SectionTitle>
            <p>
              <b>Course topics:</b> classification, clustering, dimensionality reduction, deep learning, real world applications and<br />
              considerations, and more
            </p>
            {facts.map(([k, v]) => <p key={k}><b>{k}</b>{v}</p>)}
          </Article>
          <Aside>
            <AsideButton><Bars />View Course Stream</AsideButton>
            <AsideButton><CalendarDay />View Course Calendar</AsideButton>
            <AsideButton><Bell />View Course Notifications</AsideButton>
            <AsideHead $mt={39.5}>To Do</AsideHead>
            {todos.map((t, i) => (
              <Todo key={t.title[0]} $first={i === 0}>
                <TodoMark><TodoIcon /></TodoMark>
                <TodoBody>
                  <TodoTitle>{t.title.map((s) => <div key={s}>{s}</div>)}</TodoTitle>
                  <TodoCourse>CSE 475: Found of<br />Machine Learning (2025<br />Fall C)</TodoCourse>
                  {t.lines.map((s) => <TodoLine key={s}>{s}</TodoLine>)}
                </TodoBody>
                <TodoClose>
                  <svg width="22" height="40" viewBox="0 0 22 40" stroke={INK} strokeWidth="4.400"><path d="M2 11l18 18M20 11L2 29" /></svg>
                </TodoClose>
              </Todo>
            ))}
            <AsideHead $mt={14}>Course Groups</AsideHead>
            <GroupLink>Lab5-12</GroupLink>
          </Aside>
        </Columns>
      </Main>
    </Page>
  </Browser>
);

const RecorderWindow = () => (
  <Recorder>
    <RecorderBar>
      <Lights $c="#5b5d5a"><i /><i /><i /></Lights>
      <span>AgentFlow Recorder</span>
    </RecorderBar>
    <RecTitle>
      <svg width="44" height="43" viewBox="0 0 44 43">
        <circle cx="10" cy="10" r="8.500" fill="#3b4044" stroke="#8d9295" strokeWidth="1.500" />
        <circle cx="29" cy="10" r="8.500" fill="#3b4044" stroke="#8d9295" strokeWidth="1.500" />
        <circle cx="10" cy="10" r="3" fill="#9aa0a3" /><circle cx="29" cy="10" r="3" fill="#9aa0a3" />
        <path d="M3 19c8-4 22 0 28 6v14c-3 4-26 4-28 0z" fill="#202224" stroke="#85898b" strokeWidth="1" />
        <path d="M31 29h4l8-5v18l-8-5h-4z" fill="#44494c" stroke="#9a9fa1" />
        <path d="M2 13l28 11" stroke="#85898b" strokeWidth="2.500" />
        <rect x="11" y="31" width="12" height="6" fill="#3d4143" stroke="#8a8e90" />
      </svg>
      <span>AgentFlow Recorder</span>
    </RecTitle>
    <RecState>
      <svg width="38" height="38" viewBox="0 0 38 38">
        <circle cx="19" cy="19" r="19" fill="#d23b2c" />
        <ellipse cx="19" cy="9" rx="13" ry="7" fill="#f08a78" opacity=".55" />
      </svg>
      Recording
    </RecState>
    <RecTimer>00:27</RecTimer>
    <RecNote>
      <svg width="31" height="28" viewBox="0 0 31 28">
        <path d="M0 5l23-2v6H0z" fill="#d6d8d6" />
        <path d="M2 9h27v17H2z" fill="#a3a5a3" />
        <path d="M23 5l7-5v9h-7z" fill="#7d807e" />
        <circle cx="12" cy="17" r="5" fill="#3c3f3c" /><circle cx="21" cy="18" r="3" fill="#555" />
      </svg>
      Recording...
    </RecNote>
    <RecButtons>
      <RecButton>
        <svg width="17" height="17"><circle cx="8.500" cy="8.500" r="8.500" fill="#aeb0ad" /></svg>
        START
      </RecButton>
      <RecButton $stop>
        <svg width="15" height="15"><rect width="15" height="15" fill="#000" /></svg>
        STOP
      </RecButton>
    </RecButtons>
  </Recorder>
);

export default function App() {
  return (
    <Desktop>
      <GlobalStyle />
      <Gradients />
      <MenuBar>
        <MenuTitle $w={69}><FaApple size={31} /></MenuTitle>
        <MenuTitle $w={133} $bold $ls={0.3}>Python</MenuTitle>
        <MenuTitle $w={84}>File</MenuTitle>
        <MenuTitle $w={88}>Edit</MenuTitle>
        <MenuTitle $w={138}>Window</MenuTitle>
        <MenuTitle $w={60}>Help</MenuTitle>
        <Status>
          <SharePill>
            <svg width="40" height="28" viewBox="0 0 40 28">
              <rect x="1.500" y="1.500" width="31" height="23" rx="3" fill="#8481dc" stroke="#fff" strokeWidth="2.600" />
              <path d="M21 28c0-7 3-9 6-10-4-4-2-10 3-10s7 6 3 10c3 1 6 3 6 10z" fill="#fff" stroke="#5551c9" strokeWidth="1.500" />
            </svg>
          </SharePill>
          {statusIcons.map(([w, ml, icon], i) => <Slot key={i} $w={w} $ml={ml}>{icon}</Slot>)}
          <Clock><span>Sat Oct 25</span><ClockTime>6:02 PM</ClockTime></Clock>
        </Status>
      </MenuBar>
      <BrowserWindow />
      <Alert>
        <Rocket w={48} h={124} />
        <AlertText>Stop recording and<br />process workflow?</AlertText>
        <AlertButtons>
          <AlertButton>No</AlertButton>
          <AlertButton $primary>Yes</AlertButton>
        </AlertButtons>
      </Alert>
      <RecorderWindow />
      <DockBar>
        {dock.map((d, i) =>
          d ? (
            <DockCell key={i}>
              {d.icon}
              {d.badge && <DockBadge $w={d.badge.length > 1 ? 66 : 45}>{d.badge}</DockBadge>}
              {d.running && <Running />}
            </DockCell>
          ) : (
            <DockRule key={i} />
          )
        )}
      </DockBar>
    </Desktop>
  );
}
